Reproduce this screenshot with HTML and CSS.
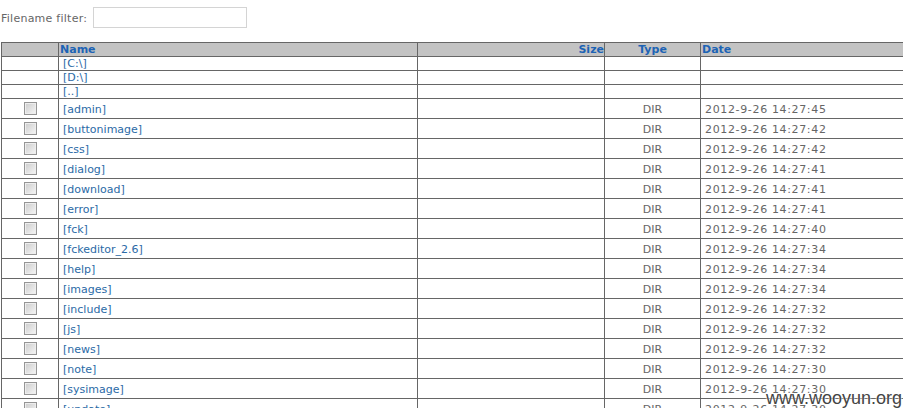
FILE: index.html
```html
<!DOCTYPE html>
<html lang="en">
<head>
    <meta charset="UTF-8">
    <title>File Manager</title>
    <link rel="stylesheet" href="styles.css">
</head>
<body>
    <div class="filter">
        <label for="filter">Filename filter:</label>
        <input type="text" id="filter">
    </div>

    <table class="files">
        <colgroup>
            <col class="c-check">
            <col class="c-name">
            <col class="c-size">
            <col class="c-type">
            <col class="c-date">
        </colgroup>
        <tr class="head">
            <th></th>
            <th class="name">Name</th>
            <th class="size">Size</th>
            <th class="type">Type</th>
            <th class="date">Date</th>
        </tr>
        <tr class="drive"><td></td><td class="name"><a href="#">[C:\]</a></td><td></td><td></td><td></td></tr>
        <tr class="drive"><td></td><td class="name"><a href="#">[D:\]</a></td><td></td><td></td><td></td></tr>
        <tr class="drive"><td></td><td class="name"><a href="#">[..]</a></td><td></td><td></td><td></td></tr>
        <tr><td class="check"><input type="checkbox"></td><td class="name"><a href="#">[admin]</a></td><td></td><td class="type">DIR</td><td class="date">2012-9-26 14:27:45</td></tr>
        <tr><td class="check"><input type="checkbox"></td><td class="name"><a href="#">[buttonimage]</a></td><td></td><td class="type">DIR</td><td class="date">2012-9-26 14:27:42</td></tr>
        <tr><td class="check"><input type="checkbox"></td><td class="name"><a href="#">[css]</a></td><td></td><td class="type">DIR</td><td class="date">2012-9-26 14:27:42</td></tr>
        <tr><td class="check"><input type="checkbox"></td><td class="name"><a href="#">[dialog]</a></td><td></td><td class="type">DIR</td><td class="date">2012-9-26 14:27:41</td></tr>
        <tr><td class="check"><input type="checkbox"></td><td class="name"><a href="#">[download]</a></td><td></td><td class="type">DIR</td><td class="date">2012-9-26 14:27:41</td></tr>
        <tr><td class="check"><input type="checkbox"></td><td class="name"><a href="#">[error]</a></td><td></td><td class="type">DIR</td><td class="date">2012-9-26 14:27:41</td></tr>
        <tr><td class="check"><input type="checkbox"></td><td class="name"><a href="#">[fck]</a></td><td></td><td class="type">DIR</td><td class="date">2012-9-26 14:27:40</td></tr>
        <tr><td class="check"><input type="checkbox"></td><td class="name"><a href="#">[fckeditor_2.6]</a></td><td></td><td class="type">DIR</td><td class="date">2012-9-26 14:27:34</td></tr>
        <tr><td class="check"><input type="checkbox"></td><td class="name"><a href="#">[help]</a></td><td></td><td class="type">DIR</td><td class="date">2012-9-26 14:27:34</td></tr>
        <tr><td class="check"><input type="checkbox"></td><td class="name"><a href="#">[images]</a></td><td></td><td class="type">DIR</td><td class="date">2012-9-26 14:27:34</td></tr>
        <tr><td class="check"><input type="checkbox"></td><td class="name"><a href="#">[include]</a></td><td></td><td class="type">DIR</td><td class="date">2012-9-26 14:27:32</td></tr>
        <tr><td class="check"><input type="checkbox"></td><td class="name"><a href="#">[js]</a></td><td></td><td class="type">DIR</td><td class="date">2012-9-26 14:27:32</td></tr>
        <tr><td class="check"><input type="checkbox"></td><td class="name"><a href="#">[news]</a></td><td></td><td class="type">DIR</td><td class="date">2012-9-26 14:27:32</td></tr>
        <tr><td class="check"><input type="checkbox"></td><td class="name"><a href="#">[note]</a></td><td></td><td class="type">DIR</td><td class="date">2012-9-26 14:27:30</td></tr>
        <tr><td class="check"><input type="checkbox"></td><td class="name"><a href="#">[sysimage]</a></td><td></td><td class="type">DIR</td><td class="date">2012-9-26 14:27:30</td></tr>
        <tr><td class="check"><input type="checkbox"></td><td class="name"><a href="#">[update]</a></td><td></td><td class="type">DIR</td><td class="date">2012-9-26 14:27:30</td></tr>
    </table>

    <div class="watermark">www.wooyun.org</div>
</body>
</html>
```

FILE: styles.css
```css
html, body {
    overflow: hidden;
}
body {
    margin: 0;
    padding: 0 0 0 1px;
    font-family: "DejaVu Sans", Verdana, sans-serif;
    font-size: 11px;
    color: #666;
    background: #fff;
}
.filter {
    display: flex;
    align-items: center;
    gap: 4px;
    padding-top: 7px;
    height: 21px;
    margin-bottom: 14px;
}
.filter label {
    color: #666;
    padding-top: 2px;
    letter-spacing: 0.25px;
}
.filter input {
    width: 150px;
    height: 17px;
    padding: 1px;
    border: 1px solid #d4d4d4;
    margin: 0 0 0 2px;
}
.files {
    border-collapse: collapse;
    width: 1040px;
    table-layout: fixed;
}
.c-check { width: 57px; }
.c-name { width: 359px; }
.c-size { width: 187px; }
.c-type { width: 96px; }
.files th,
.files td {
    border: 1px solid #666;
    padding: 1px 0 0 0;
    white-space: nowrap;
    overflow: hidden;
}
.files tr.head th {
    background-color: #c3c3c3;
    color: #1d63b5;
    font-weight: bold;
    text-align: left;
    height: 12px;
    line-height: 12px;
}
.files tr.head th.name {
    padding-left: 1px;
}
.files tr.head th.size {
    text-align: right;
}
.files tr.head th.type {
    text-align: center;
}
.files tr.head th.date {
    padding-left: 1px;
}
.files a {
    color: #2b6aa6;
    text-decoration: none;
}
.files td {
    height: 17px;
    line-height: 17px;
    padding-top: 2px;
}
.files td.name {
    padding-left: 4px;
}
.files tr.drive td {
    height: 12px;
    line-height: 12px;
    padding-top: 1px;
}
.files td.check {
    text-align: center;
}
.files td.type {
    text-align: center;
}
.files td.date {
    padding-left: 4px;
    letter-spacing: 0.65px;
}
.files input[type="checkbox"] {
    appearance: none;
    -webkit-appearance: none;
    display: inline-block;
    vertical-align: middle;
    width: 13px;
    height: 13px;
    margin: -3px 0 0 0;
    border: 1px solid #959595;
    background: linear-gradient(135deg, #cbcbcb, #f6f6f6);
    box-shadow: inset 0 0 0 1px #ededed;
}
.watermark {
    position: absolute;
    right: 1px;
    bottom: 0;
    font-family: "Liberation Sans", Arial, sans-serif;
    font-size: 18px;
    line-height: 20px;
    color: #444;
    text-shadow: 0 0 2px #fff, 0 0 2px #fff;
}
```
